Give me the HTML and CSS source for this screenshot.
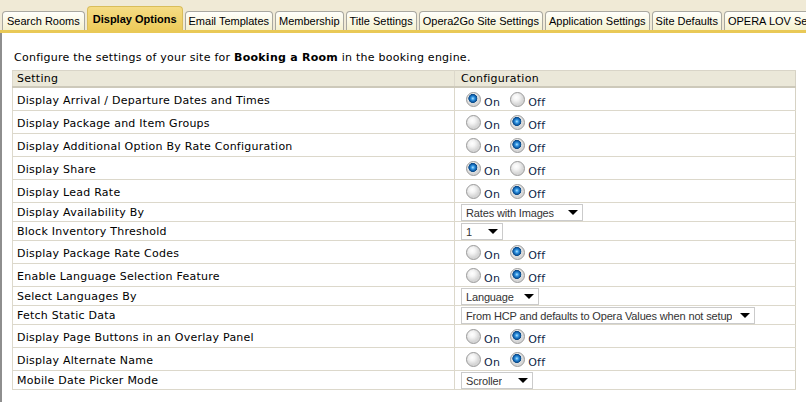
FILE: index.html
```html
<!DOCTYPE html>
<html>
<head>
<meta charset="utf-8">
<link rel="stylesheet" href="styles.css">
</head>
<body>
<div class="tabbar">
  <div class="tab first">Search Rooms</div>
  <div class="tab active">Display Options</div>
  <div class="tab">Email Templates</div>
  <div class="tab">Membership</div>
  <div class="tab">Title Settings</div>
  <div class="tab">Opera2Go Site Settings</div>
  <div class="tab">Application Settings</div>
  <div class="tab">Site Defaults</div>
  <div class="tab">OPERA LOV Settings</div>
</div>
<div class="strip"></div>
<div class="content">
  <p class="intro">Configure the settings of your site for <b>Booking a Room</b> in the booking engine.</p>
  <table class="grid">
    <thead>
      <tr><th class="c1">Setting</th><th class="c2">Configuration</th></tr>
    </thead>
    <tbody>
      <tr class="rr"><td class="c1">Display Arrival / Departure Dates and Times</td><td class="c2"><span class="opts"><input type="radio" class="rd" name="r1" checked><span class="lb">On</span><input type="radio" class="rd" name="r1"><span class="lb">Off</span></span></td></tr>
      <tr class="rr"><td class="c1">Display Package and Item Groups</td><td class="c2"><span class="opts"><input type="radio" class="rd" name="r2"><span class="lb">On</span><input type="radio" class="rd" name="r2" checked><span class="lb">Off</span></span></td></tr>
      <tr class="rr"><td class="c1">Display Additional Option By Rate Configuration</td><td class="c2"><span class="opts"><input type="radio" class="rd" name="r3"><span class="lb">On</span><input type="radio" class="rd" name="r3" checked><span class="lb">Off</span></span></td></tr>
      <tr class="rr"><td class="c1">Display Share</td><td class="c2"><span class="opts"><input type="radio" class="rd" name="r4" checked><span class="lb">On</span><input type="radio" class="rd" name="r4"><span class="lb">Off</span></span></td></tr>
      <tr class="rr"><td class="c1">Display Lead Rate</td><td class="c2"><span class="opts"><input type="radio" class="rd" name="r5"><span class="lb">On</span><input type="radio" class="rd" name="r5" checked><span class="lb">Off</span></span></td></tr>
      <tr class="sr"><td class="c1">Display Availability By</td><td class="c2"><span class="sel w122"><span class="st">Rates with Images</span><span class="tri"></span></span></td></tr>
      <tr class="sr"><td class="c1">Block Inventory Threshold</td><td class="c2"><span class="sel w42"><span class="st">1</span><span class="tri"></span></span></td></tr>
      <tr class="rr"><td class="c1">Display Package Rate Codes</td><td class="c2"><span class="opts"><input type="radio" class="rd" name="r6"><span class="lb">On</span><input type="radio" class="rd" name="r6" checked><span class="lb">Off</span></span></td></tr>
      <tr class="rr"><td class="c1">Enable Language Selection Feature</td><td class="c2"><span class="opts"><input type="radio" class="rd" name="r7"><span class="lb">On</span><input type="radio" class="rd" name="r7" checked><span class="lb">Off</span></span></td></tr>
      <tr class="sr"><td class="c1">Select Languages By</td><td class="c2"><span class="sel w78"><span class="st">Language</span><span class="tri"></span></span></td></tr>
      <tr class="sr"><td class="c1">Fetch Static Data</td><td class="c2"><span class="sel w294"><span class="st">From HCP and defaults to Opera Values when not setup</span><span class="tri"></span></span></td></tr>
      <tr class="rr"><td class="c1">Display Page Buttons in an Overlay Panel</td><td class="c2"><span class="opts"><input type="radio" class="rd" name="r8"><span class="lb">On</span><input type="radio" class="rd" name="r8" checked><span class="lb">Off</span></span></td></tr>
      <tr class="rr"><td class="c1">Display Alternate Name</td><td class="c2"><span class="opts"><input type="radio" class="rd" name="r9"><span class="lb">On</span><input type="radio" class="rd" name="r9" checked><span class="lb">Off</span></span></td></tr>
      <tr class="sr"><td class="c1">Mobile Date Picker Mode</td><td class="c2"><span class="sel w72"><span class="st">Scroller</span><span class="tri"></span></span></td></tr>
    </tbody>
  </table>
</div>
</body>
</html>
```
FILE: styles.css
```css
html, body {
  margin: 0;
  padding: 0;
  background: #ffffff;
  overflow: hidden;
}
body {
  width: 806px;
  height: 402px;
  font-family: "DejaVu Sans", Verdana, sans-serif;
  font-size: 11px;
  letter-spacing: 0.25px;
  color: #000;
}
.tabbar {
  height: 30px;
  background: #f0ead6;
  display: flex;
  align-items: flex-end;
  gap: 2px;
  padding-left: 2px;
  overflow: hidden;
  white-space: nowrap;
  letter-spacing: 0;
}
.tab {
  flex-shrink: 0;
  height: 18px;
  line-height: 19px;
  padding: 0 3px;
  border: 1px solid #a9a8a0;
  border-bottom: none;
  border-radius: 4px 4px 0 0;
  background: linear-gradient(#fffffb, #f5f1cf);
  font-family: "Liberation Sans", Arial, sans-serif;
  font-size: 11px;
  color: #000;
}
.tab.first {
  padding: 0 4px;
}
.tab.active {
  height: 23px;
  line-height: 24px;
  padding: 0 5px;
  font-weight: bold;
  border-color: #d9bd5a;
  background: linear-gradient(#f5dc84, #edcb5a);
}
.strip {
  height: 3px;
  background: #e9c957;
}
.content {
  border-left: 2px solid #8e8e8e;
  padding: 0 10px 0 10px;
  height: 369px;
}
.intro {
  margin: 0;
  padding: 18px 0 0 2px;
  height: 19px;
  line-height: 14px;
}
.grid {
  width: 784px;
  border-collapse: collapse;
  border-left: 1px solid #ddd9cc;
  border-right: 1px solid #d6d2c4;
}
.grid th {
  height: 14px;
  background: #ebe8d9;
  border-top: 1px solid #d9d5c8;
  border-bottom: 2px solid #cdc9ba;
  font-weight: normal;
  text-align: left;
  padding: 1px 4px 0 4px;
  line-height: 14px;
}
.grid td {
  border-bottom: 1px solid #dcd8cb;
  padding: 0 4px;
}
.c1 {
  width: 433px;
  border-right: 1px solid #dcd8cb;
}
.grid th.c2, .grid td.c2 {
  padding-left: 6px;
}
.rr td {
  height: 19px;
  padding-top: 3px;
}
.sr td {
  height: 17px;
  padding-top: 1px;
}
.opts {
  display: flex;
  align-items: center;
  padding-left: 5px;
}
.rd {
  appearance: none;
  -webkit-appearance: none;
  margin: 0;
  width: 15px;
  height: 15px;
  border-radius: 50%;
  border: 1px solid #9c9c9c;
  background: radial-gradient(circle at 40% 35%, #ffffff 0, #f4f4f4 3px, #d6d6d6 7px);
  box-sizing: border-box;
  position: relative;
  top: -1px;
}
.rd:checked {
  background:
    radial-gradient(circle at 45% 42%, #bfe6ff 0, #3ca0e8 1.5px, #1569b8 3px, #0b4a86 4.2px, rgba(0,0,0,0) 4.8px),
    radial-gradient(circle at 40% 35%, #ffffff 0, #f4f4f4 3px, #d6d6d6 7px);
}
.lb {
  color: #0f1f48;
  margin: 0 10px 0 3px;
  position: relative;
  top: 2px;
}
.sel {
  display: inline-flex;
  align-items: center;
  justify-content: space-between;
  box-sizing: border-box;
  height: 17px;
  border: 1px solid #cbcbcb;
  background: #fff;
  padding: 0 4px 0 4px;
  font-family: "Liberation Sans", Arial, sans-serif;
  font-size: 11px;
  letter-spacing: -0.15px;
  color: #333;
  vertical-align: middle;
  white-space: nowrap;
}
.st {
  overflow: hidden;
}
.tri {
  flex-shrink: 0;
  margin-left: 6px;
  width: 0;
  height: 0;
  border-left: 5px solid transparent;
  border-right: 5px solid transparent;
  border-top: 5px solid #000;
}
.w122 { width: 122px; }
.w42 { width: 42px; }
.w78 { width: 78px; }
.w294 { width: 294px; }
.w72 { width: 72px; }
```
